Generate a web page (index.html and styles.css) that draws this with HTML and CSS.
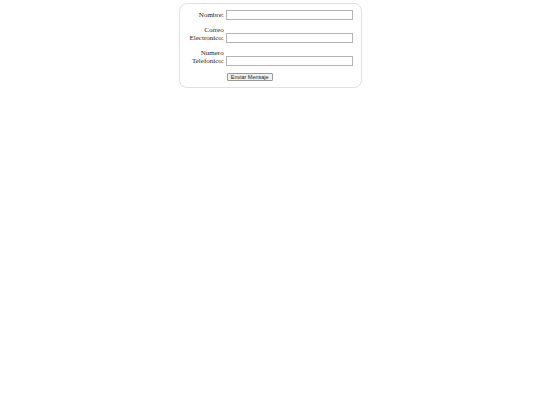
FILE: index.html
```html
<!DOCTYPE html>
<html lang="es">
<head>
<meta charset="utf-8">
<title>Contacto</title>
<link rel="stylesheet" href="styles.css">
</head>
<body>
<form class="card">
  <div class="grid">
    <label class="lbl" for="n">Nombre:</label>
    <input class="field" id="n" type="text">
    <label class="lbl" for="c">Correo<br>Electronico:</label>
    <input class="field" id="c" type="text">
    <label class="lbl" for="t">Numero<br>Telefonico:</label>
    <input class="field" id="t" type="text">
    <span></span>
    <div class="actions"><button class="btn" type="button">Enviar Mensaje</button></div>
  </div>
</form>
</body>
</html>
```
FILE: styles.css
```css
html, body {
  margin: 0;
  padding: 0;
  background: #fff;
}
body {
  font-family: "Liberation Serif", "Times New Roman", serif;
  font-size: 7px;
  color: #222;
}
.card {
  width: 183px;
  margin: 3px auto 0;
  border: 1px solid #e0e0e0;
  border-radius: 8px;
  padding: 6px 8px 6px 10px;
  box-sizing: border-box;
}
.grid {
  display: grid;
  grid-template-columns: 1fr 127px;
  column-gap: 2px;
  row-gap: 7px;
  align-items: end;
}
.lbl {
  text-align: right;
  line-height: 7.5px;
  padding-bottom: 1px;
}
.field {
  box-sizing: border-box;
  width: 127px;
  height: 10px;
  margin: 0;
  padding: 0 2px;
  border: 1px solid #b4b4b4;
  background: #fff;
  font-size: 6px;
}
.actions {
  display: flex;
  height: 8px;
}
.btn {
  box-sizing: border-box;
  margin: 0 0 0 1px;
  height: 8px;
  padding: 0 3px;
  font-family: "Liberation Sans", Arial, sans-serif;
  font-size: 5.5px;
  line-height: 6px;
  color: #222;
  background: #f0f0f0;
  border: 1px solid #999;
  border-radius: 1px;
}
```
